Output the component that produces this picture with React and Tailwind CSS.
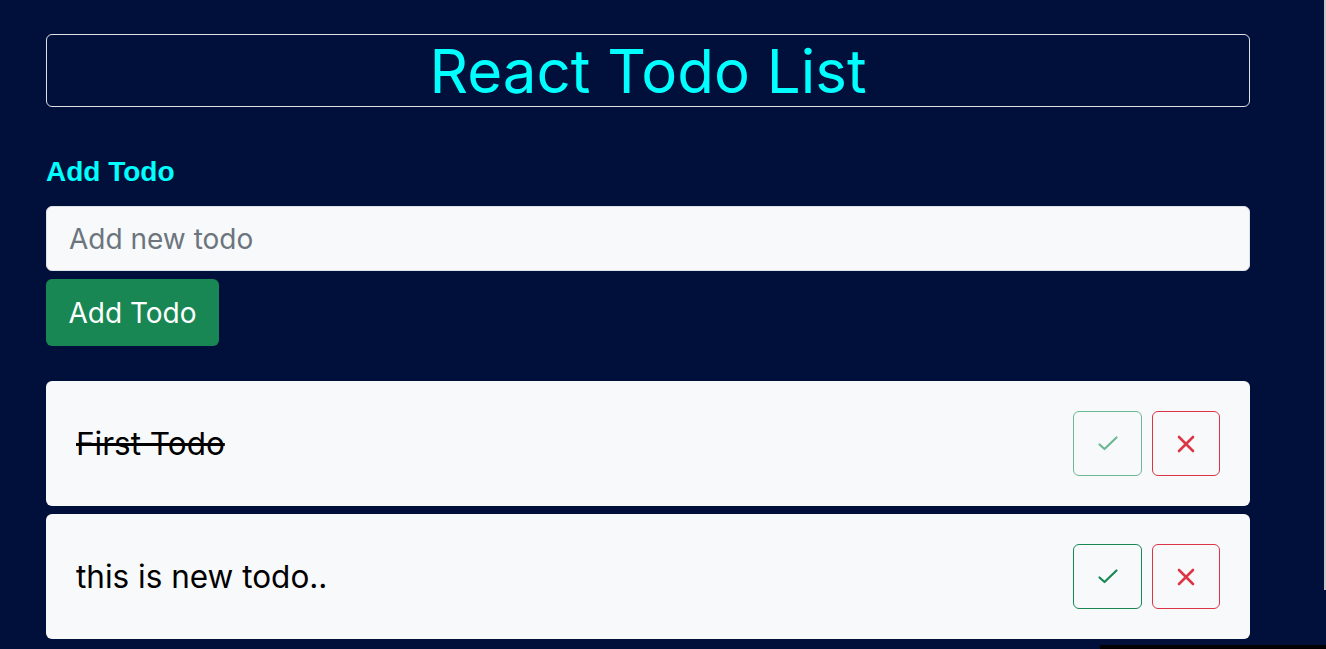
import { useState } from "react";

function CheckIcon() {
  return (
    <svg width="22" height="22" viewBox="0 0 22 22" fill="none" stroke="currentColor" strokeWidth="2.2" strokeLinecap="round" strokeLinejoin="round">
      <path d="M2.5 11.5 L7.5 16 L19.5 4.5" />
    </svg>
  );
}

function XIcon() {
  return (
    <svg width="18" height="18" viewBox="0 0 18 18" fill="none" stroke="currentColor" strokeWidth="2.6" strokeLinecap="round">
      <path d="M2 2 L16 16 M16 2 L2 16" />
    </svg>
  );
}

export default function App() {
  const [todos] = useState([
    { id: 1, text: "First Todo", done: true },
    { id: 2, text: "this is new todo..", done: false },
  ]);

  return (
    <div className="min-h-[649px] bg-[#00103a] relative" style={{ fontFamily: "Inter, 'Noto Sans', sans-serif" }}>
      <div className="w-[1204px] ml-[46px] pt-[34px]">
        {/* HEADER */}
        <div className="border border-[#dee2e6] rounded-md h-[73px] flex items-center justify-center">
          <h1 className="text-[60px] leading-[1.2] text-[#00ffff]">React Todo List</h1>
        </div>

        {/* FORM */}
        <h2 className="mt-[49px] text-[28px] font-bold leading-[32px] text-[#00ffff]" style={{ fontFamily: "'Liberation Sans', Arial, sans-serif" }}>
          Add Todo
        </h2>
        <input
          className="mt-[18px] w-full h-[65px] bg-[#f8f9fa] border border-[#dee2e6] rounded-md px-[22px] text-[28px] text-[#212529] placeholder:text-[#6c757d] outline-none"
          placeholder="Add new todo"
        />
        <button className="mt-[8px] w-[173px] h-[67px] bg-[#198754] rounded-md text-white text-[28px]">
          Add Todo
        </button>

        {/* LIST */}
        <div className="mt-[35px] flex flex-col gap-[8px]">
          {todos.map((t) => (
            <div key={t.id} className="h-[125px] bg-[#f8f9fa] rounded-md flex items-center justify-between pl-[30px] pr-[30px]">
              <span className={"text-[31.5px] text-black " + (t.done ? "line-through" : "")}>{t.text}</span>
              <div className="flex gap-[10px]">
                <button className={"w-[69px] h-[65px] rounded-md border flex items-center justify-center " + (t.done ? "border-[#6db894] text-[#6db894]" : "border-[#198754] text-[#198754]")}>
                  <CheckIcon />
                </button>
                <button className="w-[68px] h-[65px] rounded-md border border-[#dc3545] text-[#dc3545] flex items-center justify-center">
                  <XIcon />
                </button>
              </div>
            </div>
          ))}
        </div>
      </div>
      <div className="absolute right-0 top-0 w-[2px] h-[590px] bg-[#c8c8c8]" />
      <div className="absolute right-0 bottom-0 w-[226px] h-[4px] bg-black" />
    </div>
  );
}
